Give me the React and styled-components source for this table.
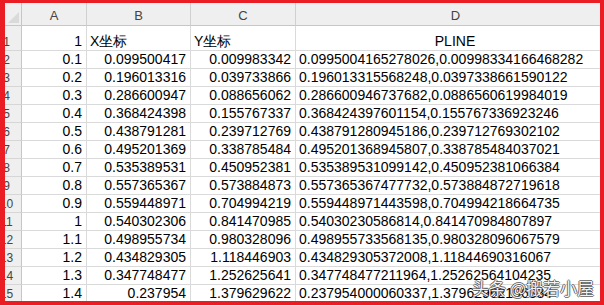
import React from 'react';
import styled, { createGlobalStyle } from 'styled-components';

const GlobalStyle = createGlobalStyle`
  html, body {
    margin: 0;
    padding: 0;
    background: #ffffff;
  }
  body {
    font-family: "Liberation Sans", Arial, sans-serif;
  }
`;

const Frame = styled.div`
  position: relative;
  box-sizing: border-box;
  width: 604px;
  height: 305px;
  overflow: hidden;
  border-style: solid;
  border-color: #ea1d25;
  border-width: 3px 4px 4px 5px;
  background: #ffffff;
`;

const Grid = styled.div`
  display: grid;
  grid-template-columns: 17px 65px 104px 105px 320px;
  grid-template-rows: 23px 25px;
  grid-auto-rows: 18px;
  font-size: 14px;
  color: #000000;
`;

const Corner = styled.div`
  position: relative;
  box-sizing: border-box;
  background: #efefef;
  border-right: 1px solid #c6c6c6;
  border-bottom: 1px solid #c6c6c6;
`;

const CornerMark = styled.div`
  position: absolute;
  right: 2px;
  bottom: 2px;
  width: 11px;
  height: 11px;
  background: #dadada;
  clip-path: polygon(100% 0, 100% 100%, 0 100%);
`;

const ColHead = styled.div`
  box-sizing: border-box;
  display: flex;
  align-items: flex-end;
  justify-content: center;
  padding-bottom: 1px;
  background: #efefef;
  border-right: 1px solid #d0d0d0;
  border-bottom: 1px solid #c6c6c6;
  font-size: 13px;
  line-height: 17px;
  color: #444444;
`;

const RowHead = styled.div`
  box-sizing: border-box;
  display: flex;
  align-items: flex-end;
  overflow: hidden;
  background: #efefef;
  border-right: 1px solid #c6c6c6;
  border-bottom: 1px solid #d6d6d6;
  font-size: 12px;
  line-height: 16px;
  color: #444444;
`;

const RowNum = styled.span`
  display: block;
  flex: none;
  width: 31px;
  margin-left: -14px;
  text-align: center;
`;

const Cell = styled.div`
  box-sizing: border-box;
  display: flex;
  align-items: flex-end;
  justify-content: ${p => (p.$align === 'right' ? 'flex-end' : p.$align === 'center' ? 'center' : 'flex-start')};
  padding: 0 4px 0 3px;
  border-right: 1px solid #dadada;
  border-bottom: 1px solid #dadada;
  line-height: 17px;
  white-space: nowrap;
  overflow: hidden;
`;

const Watermark = styled.div`
  position: absolute;
  right: 6px;
  bottom: 3px;
  font-family: "Noto Sans CJK SC", "Liberation Sans", sans-serif;
  font-size: 17px;
  line-height: 20px;
  color: rgba(255, 255, 255, 0.95);
  text-shadow:
    1px 0 0 rgba(60, 60, 60, 0.7),
    -1px 0 0 rgba(60, 60, 60, 0.7),
    0 1px 0 rgba(60, 60, 60, 0.7),
    0 -1px 0 rgba(60, 60, 60, 0.7);
  white-space: nowrap;
`;

const rows = [
  ['0.1', '0.099500417', '0.009983342', '0.0995004165278026,0.00998334166468282'],
  ['0.2', '0.196013316', '0.039733866', '0.196013315568248,0.0397338661590122'],
  ['0.3', '0.286600947', '0.088656062', '0.286600946737682,0.0886560619984019'],
  ['0.4', '0.368424398', '0.155767337', '0.368424397601154,0.155767336923246'],
  ['0.5', '0.438791281', '0.239712769', '0.438791280945186,0.239712769302102'],
  ['0.6', '0.495201369', '0.338785484', '0.495201368945807,0.338785484037021'],
  ['0.7', '0.535389531', '0.450952381', '0.535389531099142,0.450952381066384'],
  ['0.8', '0.557365367', '0.573884873', '0.557365367477732,0.573884872719618'],
  ['0.9', '0.559448971', '0.704994219', '0.559448971443598,0.704994218664735'],
  ['1', '0.540302306', '0.841470985', '0.54030230586814,0.841470984807897'],
  ['1.1', '0.498955734', '0.980328096', '0.498955733568135,0.980328096067579'],
  ['1.2', '0.434829305', '1.118446903', '0.434829305372008,1.11844690316067'],
  ['1.3', '0.347748477', '1.252625641', '0.347748477211964,1.25262564104235'],
  ['1.4', '0.237954', '1.379629622', '0.237954000060337,1.37962962196384'],
];

const App = () => (
  <>
    <GlobalStyle />
    <Frame>
      <Grid>
        <Corner>
          <CornerMark />
        </Corner>
        {['A', 'B', 'C', 'D'].map(l => (
          <ColHead key={l}>{l}</ColHead>
        ))}

        <RowHead><RowNum>1</RowNum></RowHead>
        <Cell $align="right">1</Cell>
        <Cell>X坐标</Cell>
        <Cell>Y坐标</Cell>
        <Cell $align="center">PLINE</Cell>

        {rows.map((r, i) => (
          <React.Fragment key={i}>
            <RowHead><RowNum>{i + 2}</RowNum></RowHead>
            <Cell $align="right">{r[0]}</Cell>
            <Cell $align="right">{r[1]}</Cell>
            <Cell $align="right">{r[2]}</Cell>
            <Cell>{r[3]}</Cell>
          </React.Fragment>
        ))}
      </Grid>
      <Watermark>头条 @搬若小屋</Watermark>
    </Frame>
  </>
);

export default App;
